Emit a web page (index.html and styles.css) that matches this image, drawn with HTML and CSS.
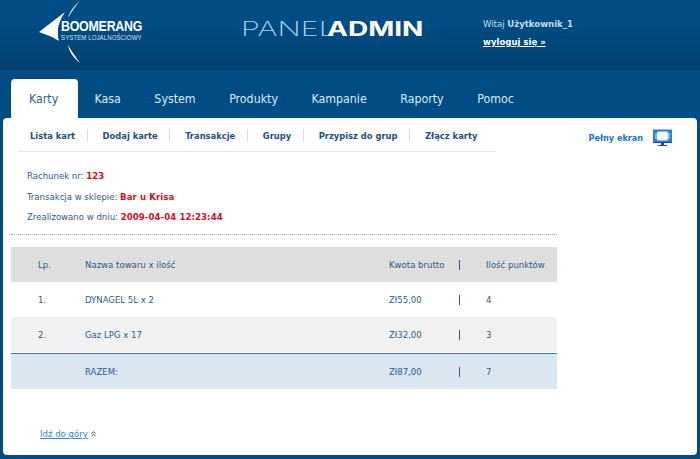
FILE: index.html
```html
<!DOCTYPE html>
<html lang="pl">
<head>
<meta charset="utf-8">
<title>Panel Admin</title>
<link rel="stylesheet" href="styles.css">
</head>
<body>
<header class="top">
  <div class="logo">
    <svg class="logo-mark" width="44" height="64" viewBox="0 0 44 64">
      <path fill="#fff" d="M1 31 L27 11 C23 17 21 22 20 27 L20 36 L21 40 L14 36 Z"/>
      <path fill="#fff" d="M42 0 C36 5 32 10 30 17 C33 11 37 6 42 0 Z M30 44 C31 51 36 57 42 62 C38 56 34 51 30 44 Z"/>
    </svg>
    <div class="logo-text">
      <div class="logo-name">BOOMERANG</div>
      <div class="logo-sub">SYSTEM LOJALNOŚCIOWY</div>
    </div>
  </div>
  <div class="brand"><span class="brand-thin">PANEL</span><span class="brand-bold">ADMIN</span></div>
  <div class="user">
    <div class="hello">Witaj <b>Użytkownik_1</b></div>
    <a class="logout" href="#">wyloguj się »</a>
  </div>
</header>
<nav class="tabs">
  <a class="tab active" href="#">Karty</a>
  <a class="tab" href="#">Kasa</a>
  <a class="tab" href="#">System</a>
  <a class="tab" href="#">Produkty</a>
  <a class="tab" href="#">Kampanie</a>
  <a class="tab" href="#">Raporty</a>
  <a class="tab" href="#">Pomoc</a>
</nav>
<main class="panel">
  <div class="subbar">
    <ul class="subnav">
      <li><a href="#">Lista kart</a></li>
      <li><a href="#">Dodaj karte</a></li>
      <li><a href="#">Transakcje</a></li>
      <li><a href="#">Grupy</a></li>
      <li><a href="#">Przypisz do grup</a></li>
      <li><a href="#">Złącz karty</a></li>
    </ul>
    <a class="fullscreen" href="#">Pełny ekran
      <svg width="19" height="18" viewBox="0 0 19 18">
        <rect x="0" y="0" width="19" height="14" fill="#2f7fd6"/>
        <rect x="0" y="0" width="19" height="1" fill="#8cc0ec"/>
        <rect x="0" y="13" width="19" height="1" fill="#1746b4"/>
        <rect x="2" y="2" width="15" height="10" fill="#7fb6e6"/>
        <rect x="4" y="3" width="11" height="8" rx="2" fill="#f2f8fd"/>
        <path fill="#2f7fd6" d="M2 2h2v2H2zM15 2h2v2h-2zM2 10h2v2H2zM15 10h2v2h-2z"/>
        <path fill="#1746b4" d="M8 14h3v2h3v1H5v-1h3z"/>
      </svg>
    </a>
  </div>
  <div class="info">
    <p>Rachunek nr: <b>123</b></p>
    <p>Transakcja w sklepie: <b>Bar u Krisa</b></p>
    <p>Zrealizowano w dniu: <b>2009-04-04 12:23:44</b></p>
  </div>
  <table class="items">
    <thead>
      <tr><th class="c-lp">Lp.</th><th class="c-name">Nazwa towaru x ilość</th><th class="c-amt">Kwota brutto</th><th class="c-sep"><i></i></th><th class="c-pts">Ilość punktów</th></tr>
    </thead>
    <tbody>
      <tr><td>1.</td><td>DYNAGEL 5L x 2</td><td>Zł55,00</td><td class="c-sep"><i></i></td><td>4</td></tr>
      <tr class="alt"><td>2.</td><td>Gaz LPG x 17</td><td>Zł32,00</td><td class="c-sep"><i></i></td><td>3</td></tr>
      <tr class="sum"><td></td><td>RAZEM:</td><td>Zł87,00</td><td class="c-sep"><i></i></td><td>7</td></tr>
    </tbody>
  </table>
  <div class="totop"><a href="#">Idź do góry</a>
    <svg class="up" width="5" height="6" viewBox="0 0 5 6"><path fill="none" stroke="#2d5a8c" d="M0.5 2.5 L2.5 0.8 L4.5 2.5 M0.5 5 L2.5 3.3 L4.5 5"/></svg>
  </div>
</main>
</body>
</html>
```
FILE: styles.css
```css
* { box-sizing: border-box; }
html, body { margin: 0; height: 459px; overflow: hidden; }
body {
  background: #004c84;
  font-family: "DejaVu Sans Condensed", "DejaVu Sans", Verdana, sans-serif;
  font-stretch: condensed;
  font-size: 9.5px;
  color: #2d5a8c;
}
a { color: inherit; }
.top {
  height: 70px;
  display: flex;
  background: linear-gradient(#004c84, #004c84 35%, #00406f);
  border-bottom: 1px solid #003c69;
}
.logo { width: 241px; padding: 1px 0 0 38px; display: flex; }
.logo-mark { margin-right: -21px; flex: none; }
.logo-text { padding-top: 17px; color: #fff; width: 81px; }
.logo-name { font: bold 15.5px/16px "Liberation Sans", Arial, sans-serif; letter-spacing: -0.3px; white-space: nowrap; transform: scaleX(0.8); transform-origin: left center; }
.logo-sub { font: 7.5px/8px "Liberation Sans", Arial, sans-serif; letter-spacing: 0.1px; white-space: nowrap; color: #d5e4f0; transform: scaleX(0.81); transform-origin: left center; }
.brand { width: 242px; padding-top: 17px; display: flex; font: 20px/24px Inter, "Liberation Sans", Arial, sans-serif; }
.brand-thin { display: block; width: 86px; color: #a9d8f5; font-weight: 200; transform: scaleX(1.52); transform-origin: left center; }
.brand-bold { display: block; color: #fff; font-weight: 700; transform: scaleX(1.4); transform-origin: left center; }
.user { color: #c4dcef; padding-top: 17px; }
.hello { line-height: 13px; }
.logout { display: block; margin-top: 5px; color: #fff; font-weight: bold; line-height: 13px; }
.tabs { display: flex; height: 48px; padding: 9px 0 0 11px; background: #004c84; }
.tab {
  height: 39px;
  padding-top: 13px;
  color: #dcebf6;
  text-decoration: none;
  font-size: 12.3px;
  line-height: 14px;
  margin-left: 33.5px;
}
.tab.active {
  width: 67px;
  margin-left: 0;
  margin-right: -17px;
  padding-left: 18px;
  background: #fff;
  color: #2d6094;
  border-radius: 4px 4px 0 0;
}
.panel {
  margin: 0 3px;
  height: 337px;
  background: #fff;
  border-radius: 4px;
  padding-top: 9px;
}
.subbar { display: flex; justify-content: space-between; align-items: flex-start; padding-left: 15px; }
.subnav {
  list-style: none;
  margin: 0;
  padding: 2px 0 0;
  display: flex;
  width: 478px;
  height: 25px;
  border-bottom: 1px solid #e6e6e6;
}
.subnav li { border-right: 1px solid #d5dbe0; padding: 0 11.5px 0 15px; height: 13px; line-height: 14px; font-size: 9.3px; font-weight: bold; white-space: nowrap; color: #1f4f85; }
.subnav li:first-child { padding-left: 12px; }
.subnav li:last-child { border: 0; }
.subnav a { text-decoration: none; }
.fullscreen { display: flex; align-items: center; gap: 10px; margin: 2px 25px 0 0; color: #0f78d4; font-size: 9px; font-weight: bold; text-decoration: none; }
.info { margin-left: 8px; width: 546px; padding: 17px 0 0 16px; height: 83px; border-bottom: 1px dotted #a5a5a5; }
.info p { margin: 0 0 7.5px; line-height: 13px; height: 13px; }
.info b { color: #d3101a; letter-spacing: 0.1px; }
.items { margin: 12px 0 0 8px; width: 546px; border-collapse: separate; border-spacing: 0; table-layout: fixed; font-size: 9.5px; }
.items th { font-weight: normal; text-align: left; }
.items th, .items td { height: 35px; padding: 0; }
.items tr > :first-child { padding-left: 27px; }
.c-lp { width: 74px; }
.c-name { width: 304px; }
.c-amt { width: 70px; }
.c-sep { width: 27px; }
.c-sep i { display: block; width: 1px; height: 10px; background: #2d5a8c; }
.items thead tr { background: #dedede; }
.alt { background: #f1f1f1; }
.items .alt td { height: 36px; border-bottom: 1px solid #fff; }
.sum { background: #dae6f0; }
.items .sum td { height: 36px; border-top: 1px solid #3a75a5; }
.totop { padding: 38px 0 0 37px; color: #2a8ad4; line-height: 13px; }
.up { margin-left: 1px; }
```
